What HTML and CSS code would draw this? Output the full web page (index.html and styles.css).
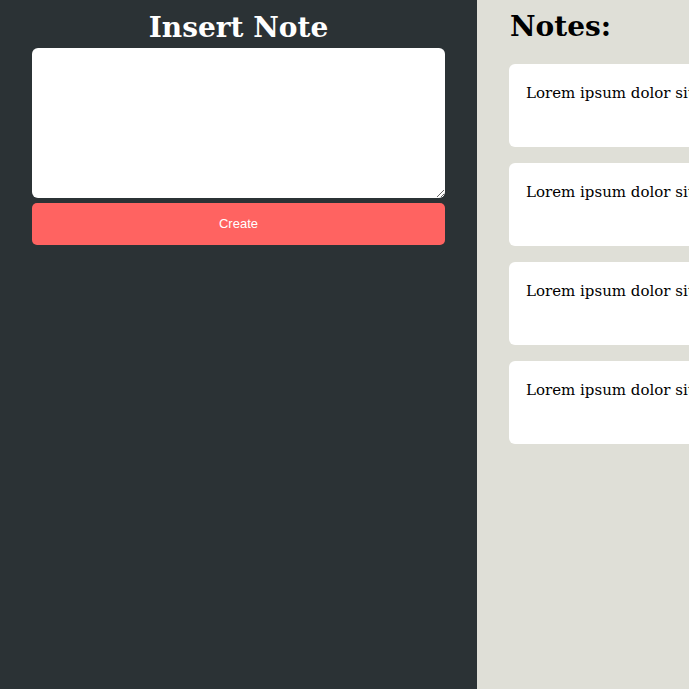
FILE: index.html
```html
<!DOCTYPE html>
<html>
<head>
<meta charset="utf-8">
<link rel="stylesheet" href="styles.css">
</head>
<body>
<div class="app">
  <section class="editor">
    <h1 class="title">Insert Note</h1>
    <textarea class="note-input"></textarea>
    <button class="create-btn">Create</button>
  </section>
  <section class="notes">
    <h2 class="notes-title">Notes:</h2>
    <div class="note-list">
      <div class="note">Lorem ipsum dolor sit</div>
      <div class="note">Lorem ipsum dolor sit</div>
      <div class="note">Lorem ipsum dolor sit</div>
      <div class="note">Lorem ipsum dolor sit</div>
    </div>
  </section>
</div>
</body>
</html>
```
FILE: styles.css
```css
html, body {
  margin: 0;
  padding: 0;
  height: 100%;
  overflow: hidden;
}
.app {
  display: flex;
  height: 100%;
  font-family: "DejaVu Serif", "Liberation Serif", serif;
}
.editor {
  width: 477px;
  flex: none;
  background: #2b3235;
  display: flex;
  flex-direction: column;
  align-items: center;
  box-sizing: border-box;
  padding: 0 32px;
}
.title {
  margin: 0;
  color: #ffffff;
  font-size: 28px;
  line-height: 40px;
  padding-top: 8px;
  font-weight: bold;
}
.note-input {
  width: 100%;
  height: 150px;
  box-sizing: border-box;
  border: none;
  border-radius: 6px;
  background: #fff;
  margin: 0;
  display: block;
}
.create-btn {
  width: 100%;
  height: 42px;
  margin-top: 5px;
  border: none;
  border-radius: 5px;
  background: #ff6361;
  color: #fff;
  font-family: "Liberation Sans", Arial, sans-serif;
  font-size: 13px;
  line-height: 40px;
  padding: 0;
}
.notes {
  flex: 1;
  min-width: 0;
  background: #dfdfd7;
  box-sizing: border-box;
  padding-left: 32px;
  overflow: hidden;
}
.notes-title {
  margin: 0;
  color: #000;
  font-size: 28px;
  line-height: 54px;
  font-weight: bold;
  padding-left: 1px;
}
.note-list {
  display: flex;
  flex-direction: column;
  gap: 16px;
  margin-top: 10px;
}
.note {
  height: 83px;
  box-sizing: border-box;
  background: #fff;
  border-radius: 6px 0 0 6px;
  padding: 20px 0 0 17px;
  font-size: 15px;
  white-space: nowrap;
  overflow: hidden;
  color: #000;
}
```
